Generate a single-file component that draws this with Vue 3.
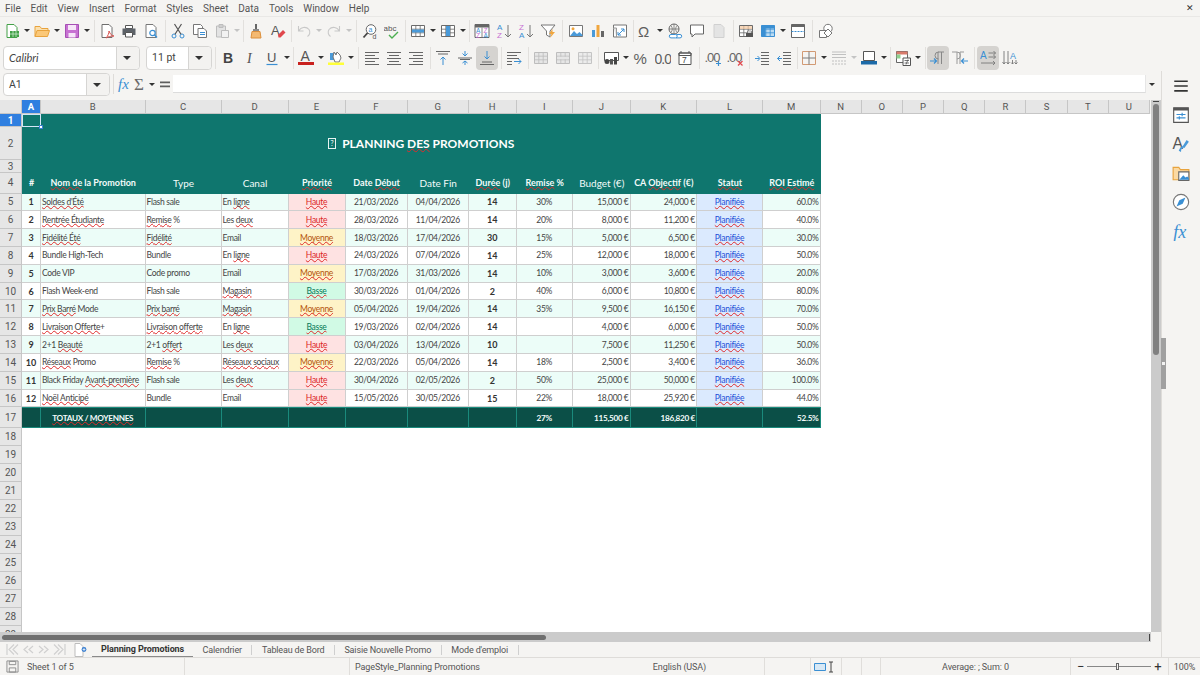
<template>
  <div class="app">
    <div class="menubar">
      <span v-for="m in menus" :key="m" class="menu-item">{{ m }}</span>
      <span class="close-x">✕</span>
    </div>

    <div class="toolbar">
      <template v-for="(item, i) in toolbar1" :key="i">
        <span v-if="item.type === 'sep'" class="tb-sep" :style="{ width: item.w + 'px' }"></span>
        <span v-else-if="item.type === 'drop'" class="tb-drop" :class="{ off: item.off }"></span>
        <span v-else class="tb-btn" :class="{ active: item.active }"><svg viewBox="0 0 16 16" width="16" height="16" v-html="icons[item.name]"></svg></span>
      </template>
    </div>

    <div class="toolbar toolbar-two">
      <div class="combo font-combo">
        <span class="combo-text font-name">Calibri</span>
        <span class="combo-arrow"></span>
      </div>
      <div class="combo size-combo">
        <span class="combo-text">11 pt</span>
        <span class="combo-arrow"></span>
      </div>
      <template v-for="(item, i) in toolbar2" :key="i">
        <span v-if="item.type === 'sep'" class="tb-sep" :style="{ width: item.w + 'px' }"></span>
        <span v-else-if="item.type === 'drop'" class="tb-drop" :class="{ off: item.off }"></span>
        <span v-else class="tb-btn" :class="{ active: item.active }"><svg viewBox="0 0 16 16" width="16" height="16" v-html="icons[item.name]"></svg></span>
      </template>
    </div>

    <div class="workspace">
      <div class="main">
        <div class="formula-bar">
          <div class="combo name-combo">
            <span class="combo-text">A1</span>
            <span class="combo-arrow"></span>
          </div>
          <span class="formula-sep"></span>
          <span class="formula-icon"><svg viewBox="0 0 16 16" width="16" height="16" v-html="icons.fx"></svg></span>
          <span class="formula-icon"><svg viewBox="0 0 16 16" width="16" height="16" v-html="icons.sum"></svg></span>
          <span class="tb-drop"></span>
          <span class="formula-icon formula-eq"><svg viewBox="0 0 16 16" width="16" height="16" v-html="icons.equal"></svg></span>
          <div class="formula-input"></div>
          <span class="tb-drop formula-more"></span>
        </div>

        <div class="sheet">
          <div class="sheet-left">
            <div class="col-heads">
              <span class="corner"></span>
              <div class="col-row">
                <span
                  v-for="c in colNames"
                  :key="c"
                  class="col-head"
                  :class="{ selected: c === 'A' }"
                >{{ c }}</span>
              </div>
            </div>
            <div class="sheet-body">
              <div class="row-heads">
                <span
                  v-for="n in 29"
                  :key="n"
                  class="row-head"
                  :class="{ selected: n === 1 }"
                >{{ n }}</span>
              </div>
              <div class="cells">
                <div class="table">
                  <div class="band a1">
                    <span class="cursor"><span class="cursor-handle"></span></span>
                  </div>
                  <div class="band full"></div>
                  <div class="band title">
                    <span class="tofu">?</span>
                    <span>PLANNING <span class="sq">DES</span> PROMOTIONS</span>
                  </div>
                  <div class="band title-gap"></div>

                  <div
                    v-for="(h, i) in headers"
                    :key="'h' + i"
                    class="head-cell"
                    :class="{ large: h.large }"
                  >
                    <template v-for="(p, j) in parts(h.text)" :key="j">
                      <span :class="{ sq: p.sq }">{{ p.text }}</span>
                    </template>
                  </div>

                  <template v-for="(r, ri) in rows" :key="ri">
                    <div
                      v-for="(val, ci) in r"
                      :key="ci"
                      class="cell"
                      :class="cellClass(ci, val, ri)"
                    >
                      <template v-for="(p, j) in parts(val)" :key="j">
                        <span :class="{ sq: p.sq }">{{ p.text }}</span>
                      </template>
                    </div>
                  </template>

                  <div
                    v-for="(val, i) in totals"
                    :key="'t' + i"
                    class="total-cell"
                    :class="totalAlign[i]"
                  >
                    <template v-for="(p, j) in parts(val)" :key="j">
                      <span :class="{ sq: p.sq }">{{ p.text }}</span>
                    </template>
                  </div>
                </div>
              </div>
            </div>
          </div>
          <div class="vscroll">
            <span class="vscroll-mark"></span>
            <span class="vscroll-thumb"></span>
          </div>
        </div>

        <div class="hscroll">
          <div class="hscroll-track">
            <span class="hscroll-thumb"></span>
            <span class="hscroll-mark"></span>
          </div>
        </div>

        <div class="tabbar">
          <svg class="tab-nav" viewBox="0 0 60 13" width="60" height="13">
            <g fill="none" stroke="#d0d0d0" stroke-width="1.2">
              <path d="M1 1v11M8 1.5 3 6.5l5 5M12 1.5 7 6.5l5 5" />
              <path d="M22 3 18 6.5l4 3.5M27 3l-4 3.5 4 3.5M33 3l4 3.5-4 3.5M38 3l4 3.5-4 3.5" />
              <path d="M59 1v11M52 1.5l5 5-5 5M48 1.5l5 5-5 5" />
            </g>
          </svg>
          <span class="tab-new">
            <svg viewBox="0 0 14 14" width="14" height="14">
              <path d="M1 .5h5l3 3v10H1z" fill="#fff" stroke="#bdbdbd" />
              <circle cx="10" cy="6.5" r="2.4" fill="#3a7fd0" />
              <path d="M8.6 6.5h2.8M10 5.1v2.800" stroke="#fff" stroke-width=".7" />
            </svg>
          </span>
          <span class="tab active">Planning Promotions</span>
          <span class="tab">Calendrier</span>
          <span class="tab-sep"></span>
          <span class="tab">Tableau de Bord</span>
          <span class="tab-sep"></span>
          <span class="tab">Saisie Nouvelle Promo</span>
          <span class="tab-sep"></span>
          <span class="tab">Mode d'emploi</span>
          <span class="tab-sep"></span>
        </div>
      </div>

      <div class="sidebar">
        <span class="side-splitter"><span class="side-dot"></span></span>
        <span v-for="s in sideIcons" :key="s" class="side-btn"><svg viewBox="0 0 16 16" width="18" height="18" v-html="icons[s]"></svg></span>
      </div>
    </div>

    <div class="statusbar">
      <div class="st st-a">
        <svg viewBox="0 0 14 14" width="13" height="13">
          <path d="M1 1h12v12H1z" fill="none" stroke="#8a8a8a" />
          <path d="M3.5 1.5h7v3.5h-7zM3.5 8.5h7V13h-7z" fill="none" stroke="#8a8a8a" />
        </svg>
        <span>Sheet 1 of 5</span>
      </div>
      <div class="st st-b"></div>
      <div class="st st-c">PageStyle_Planning Promotions</div>
      <div class="st st-d">English (USA)</div>
      <div class="st st-e"></div>
      <div class="st st-f">
        <svg viewBox="0 0 24 12" width="24" height="12">
          <path d="M.5 2.5h11v7H.5z" fill="#d7e8f5" stroke="#3a8fd3" />
          <path d="M15 1h4M15 11h4M17 1v10" fill="none" stroke="#444" />
        </svg>
      </div>
      <div class="st st-g"></div>
      <div class="st st-h"></div>
      <div class="st st-i">Average: ; Sum: 0</div>
      <div class="st st-j">
        <span class="zoom-sign">−</span>
        <span class="zoom-track"><span class="zoom-handle"></span></span>
        <span class="zoom-sign">+</span>
      </div>
      <div class="st st-k">100%</div>
    </div>
  </div>
</template>

<script setup>
const menus = ['File', 'Edit', 'View', 'Insert', 'Format', 'Styles', 'Sheet', 'Data', 'Tools', 'Window', 'Help']

// tiny notation for the toolbars: "v" dropdown, "v-" greyed dropdown, "|4" separator, "name!" pressed
const parseBar = (s) => s.split(' ').map((t) => {
  if (t === 'v') return { type: 'drop' }
  if (t === 'v-') return { type: 'drop', off: true }
  if (t[0] === '|') return { type: 'sep', w: Number(t.slice(1)) }
  if (t.endsWith('!')) return { type: 'btn', name: t.slice(0, -1), active: true }
  return { type: 'btn', name: t }
})

const toolbar1 = parseBar('new v open v save v |5 pdf print preview |5 cut copy paste v- |4 clone clear |4 undo v- redo v- |6 find spell |4 rows v cols v |4 sort az za filter |6 image chart pivot |3 omega v link comment hf |5 printarea freeze v split |6 shapes')
const toolbar2 = parseBar('|5 bold italic under v |4 fcolor v hilite v |6 left center right |5 vtop vmid vbot! |5 wrap |5 merge1 merge2 merge3 |4 money v percent number date |6 adddec deldec |5 indent outdent |3 border v lines v- bcolor v |4 cond v |5 ltr! rtl |6 tltr! tvert')

const sideIcons = ['menu', 'props', 'styles', 'gallery', 'nav', 'fxside']

const SERIF = 'font-family="Liberation Serif, serif"'
const SANS = 'font-family="Liberation Sans, sans-serif"'

const T = (x, y, size, fill, text, extra = SANS) =>
  `<text x="${x}" y="${y}" font-size="${size}" fill="${fill}" ${extra}>${text}</text>`

const hlines = (list, color = '#666') =>
  `<path d="${list.map(([a, b, y]) => `M${a} ${y}H${b}`).join('')}" stroke="${color}" fill="none"/>`

const grid = (stroke, fill = '#fff') =>
  `<path d="M1.5 2.5h13v11h-13z" fill="${fill}" stroke="${stroke}"/><path d="M1.5 6.2h13M1.5 9.8h13M5.8 2.5v11M10.2 2.5v11" stroke="${stroke}" fill="none" stroke-width=".8"/>`

const doc = (stroke, fill = '#fff') =>
  `<path d="M3 1.5h7l3 3v10H3z" fill="${fill}" stroke="${stroke}"/>`

const icons = {
  new: `${doc('#43a047')}<path d="M6 8h9v6H6z" fill="#43a047"/><path d="M6 11h9M9 8v6M12 8v6" stroke="#d9f0da" stroke-width=".7"/>`,
  open: `<path d="M1 13.5v-10h5l1.5 2H14V8" fill="#fbe0ae" stroke="#e8a33d"/><path d="M1 13.5 3 7.5h12.5l-2 6z" fill="#fbc878" stroke="#e8a33d"/>`,
  save: `<path d="M1.5 1.5h13v13h-13z" fill="#c771d2" stroke="#a64fb4"/><path d="M4 2h8v5H4zM4.5 10h7v4.5h-7z" fill="#f6e6f8"/>`,
  pdf: `${doc('#6e6e6e')}<path d="M7 15c2-2 3-5 3-7 1 3 3 5 5 5-3 0-6 .6-8 2z" fill="none" stroke="#d9534f"/>`,
  print: `<path d="M4.5 2.5h7v3h-7z" fill="#fff" stroke="#555"/><path d="M1.5 5.5h13v6.5h-13z" fill="#5d6268"/><path d="M4.5 9.5h7v4.5h-7z" fill="#fff" stroke="#555"/>`,
  preview: `${doc('#777')}<circle cx="9.5" cy="10" r="2.7" fill="#fff" stroke="#3a8fd3" stroke-width="1.2"/><path d="m11.5 12 2.5 2.5" stroke="#3a8fd3" stroke-width="1.4"/>`,
  cut: `<circle cx="4" cy="13" r="2" fill="none" stroke="#3a8fd3"/><circle cx="12" cy="13" r="2" fill="none" stroke="#3a8fd3"/><path d="M5 11.3 11.5 1M11 11.3 4.5 1" stroke="#555" stroke-width="1.2"/>`,
  copy: `<path d="M1.5 1.5h7l2 2v8h-9z" fill="#fff" stroke="#777"/><path d="M6 5.5h6l2.5 2.5v6.5H6z" fill="#fff" stroke="#777"/>${hlines([[8, 13, 9.5], [8, 13, 11.5]], '#3a8fd3')}`,
  paste: `<path d="M2.5 3h9v11h-9z" fill="#e3e3e3" stroke="#bdbdbd"/><path d="M5 1.5h4v3H5z" fill="#cfcfcf" stroke="#bdbdbd"/><path d="M7.5 7.5h7v7h-7z" fill="#f2f2f2" stroke="#bdbdbd"/>`,
  clone: `<path d="M7 1h2v5H7z" fill="#666"/><path d="M5 6h6v2.5H5z" fill="#8a8a8a"/><path d="M4 8.5h8l1 6.5H3z" fill="#f4b971" stroke="#dc8f3c"/>`,
  clear: `${T(1, 12, 13, '#555', 'A')}<path d="m8 12 5-5 2.5 2.5-5 5H8.5z" fill="#e0474c"/>`,
  undo: `<path d="M2.5 3v5h5M2.8 8C4.5 4 10 3 13 6.5c1.7 2.5.7 5.5-1.5 7" fill="none" stroke="#c8c8c8" stroke-width="1.1"/>`,
  redo: `<path d="M13.5 3v5h-5M13.2 8C11.5 4 6 3 3 6.5c-1.7 2.5-.7 5.5 1.5 7" fill="none" stroke="#c8c8c8" stroke-width="1.1"/>`,
  find: `<circle cx="9" cy="6.5" r="4.8" fill="#fff" stroke="#666"/><path d="M5.5 10 1.5 14.5" stroke="#444" stroke-width="1.8"/>${T(6.6, 8.8, 7, '#3a8fd3', 'a')}${T(10.5, 15.5, 7, '#555', 'd')}`,
  spell: `${T(-.5, 8, 8, '#555', 'abc')}<path d="m5 12 3 3 6-6" fill="none" stroke="#4caf50" stroke-width="1.4"/>`,
  rows: `${grid('#6b6b6b')}<path d="M2 6.5h12v3H2z" fill="#4a9ad9"/>`,
  cols: `${grid('#6b6b6b')}<path d="M6 3h4v10H6z" fill="#4a9ad9"/>`,
  sort: `<path d="M1 1.5h14v13H1z" fill="#fff" stroke="#666"/><path d="M1 1.5h14v3H1z" fill="#666"/><path d="M8 4.5v10" stroke="#888"/>${T(2, 10, 6.5, '#3a8fd3', 'A')}${T(2, 15, 6.5, '#c771d2', 'Z')}${T(9.5, 10, 6.5, '#c771d2', 'Z')}${T(9.5, 15, 6.5, '#3a8fd3', 'A')}`,
  az: `${T(1, 7, 8, '#3a8fd3', 'A')}${T(1, 15, 8, '#c771d2', 'Z')}<path d="M12 2v12M9 11l3 3 3-3" fill="none" stroke="#777"/>`,
  za: `${T(1, 7, 8, '#c771d2', 'Z')}${T(1, 15, 8, '#3a8fd3', 'A')}<path d="M12 2v12M9 11l3 3 3-3" fill="none" stroke="#777"/>`,
  filter: `<path d="M1 2h14L10 8v6L6.5 12V8z" fill="#fff" stroke="#777"/><path d="M12.5 6 9 11h2.5L10 15l5-6h-2.5z" fill="#f0a63e"/>`,
  image: `<path d="M1.5 2.5h13v11h-13z" fill="#fff" stroke="#777"/><circle cx="5" cy="5.8" r="1.5" fill="#f0a63e"/><path d="M2 13l4-5 3 3 2.5-2 3 3v1z" fill="#4a9ad9"/>`,
  chart: `<path d="M2 7h3v7H2z" fill="#4a9ad9"/><path d="M6.5 2h3v12h-3z" fill="#f0a63e"/><path d="M11 8h3v6h-3z" fill="#666"/>`,
  pivot: `<path d="M1.5 2h13v12h-13z" fill="#fff" stroke="#777"/><path d="M1.5 5h3v9" fill="#e6e6e6" stroke="#999"/><path d="M6 12 12 6M9 6h3v3M6 9v3h3" fill="none" stroke="#3a8fd3"/>`,
  omega: T(1, 14, 15, '#5e5e5e', 'Ω'),
  link: `<circle cx="7" cy="6" r="5" fill="none" stroke="#666"/><path d="M2 6h10M7 1v10M3.8 2.5c2 2 2 5 0 7M10.2 2.5c-2 2-2 5 0 7" fill="none" stroke="#666" stroke-width=".7"/><path d="M4 11.5h4.5a1.7 1.7 0 0 1 0 3.4H4a1.7 1.7 0 0 1 0-3.4zM9.5 11.5H13a1.7 1.7 0 0 1 0 3.4H9" fill="#fff" stroke="#3a8fd3"/>`,
  comment: `<path d="M1.5 2h13v9H6l-3 3v-3H1.5z" fill="#fff" stroke="#666"/>`,
  hf: `<path d="M3 1.5h7l3 3v10H3z" fill="#e4e4e4" stroke="#d0d0d0"/>`,
  printarea: `${grid('#6b6b6b')}<path d="M2 3h12v3H2z" fill="#f4c7a0" opacity=".7"/><path d="M8 10h7v4H8z" fill="#555"/><path d="M9.5 8h4v2h-4z" fill="#fff" stroke="#555" stroke-width=".6"/>`,
  freeze: `${grid('#3a8fd3', '#bcdcf3')}<path d="M1.5 2.5h13v3h-13zM1.5 2.5h4v11h-4z" fill="#3a8fd3"/>`,
  split: `<path d="M1.5 1.5h13v13h-13z" fill="#fff" stroke="#666"/><path d="M1.5 1.5h13V4h-13z" fill="#666"/><path d="M1.5 8.5h13" stroke="#3a8fd3" stroke-dasharray="2 1"/>`,
  shapes: `<circle cx="10" cy="5.5" r="4.2" fill="#fff" stroke="#777"/><path d="M1.5 7.5h7v7h-7z" fill="#fff" stroke="#777"/><path d="m10 6 4 4-4 4-4-4z" fill="#fff" stroke="#777"/>`,

  bold: T(3, 13, 14, '#444', 'B', `${SANS} font-weight="bold"`),
  italic: T(5, 13, 14, '#555', 'I', `${SERIF} font-style="italic"`),
  under: `${T(3, 12, 13, '#555', 'U')}<path d="M2.5 14.5h11" stroke="#3a8fd3" stroke-width="1.2"/>`,
  fcolor: `${T(2.5, 11, 14, '#555', 'A')}<path d="M0 12h16v3H0z" fill="#c9211e"/>`,
  hilite: `<path d="M2 3h6v7H2z" fill="#4a9ad9"/><path d="M6 2l2 3 1-3 3 3 1 3-2 4H7L5 7z" fill="#fff" stroke="#777"/><path d="M0 12.5h16V15H0z" fill="#ffff38"/>`,
  left: hlines([[1, 15, 2.5], [1, 11, 5.5], [1, 15, 8.5], [1, 11, 11.5], [1, 15, 14.5]]),
  center: hlines([[1, 15, 2.5], [3, 13, 5.5], [1, 15, 8.5], [3, 13, 11.5], [1, 15, 14.5]]),
  right: hlines([[1, 15, 2.5], [5, 15, 5.5], [1, 15, 8.5], [5, 15, 11.5], [1, 15, 14.5]]),
  vtop: `${hlines([[1, 15, 1.5], [3, 13, 4]])}<path d="M8 7v8M5.5 9.5 8 7l2.5 2.5" fill="none" stroke="#3a8fd3"/>`,
  vmid: `${hlines([[1, 15, 8], [3, 13, 9.5]])}<path d="M8 1v5M5.5 3.5 8 6l2.5-2.5M8 15v-4M5.5 13 8 11l2.5 2" fill="none" stroke="#3a8fd3"/>`,
  vbot: `${hlines([[1, 15, 14.5], [3, 13, 12]])}<path d="M8 1v8M5.5 6.5 8 9l2.5-2.5" fill="none" stroke="#3a8fd3"/>`,
  wrap: `${hlines([[1, 15, 2.5], [1, 11, 5.5], [1, 13, 8.5], [1, 6, 11.5], [1, 6, 14.5]])}<path d="M8 11.5h7M12.5 9l2.5 2.5-2.5 2.5" fill="none" stroke="#3a8fd3"/>`,
  merge1: grid('#bdbdbd', '#e6e6e6'),
  merge2: `${grid('#bdbdbd', '#e6e6e6')}<path d="M3 6.8h10v2.4H3z" fill="#e6e6e6"/>`,
  merge3: grid('#c4c4c4', '#ececec'),
  money: `<path d="M1.5 2.5h14v8h-14z" fill="#fff" stroke="#555"/><circle cx="4" cy="11.5" r="2.5" fill="#444"/><path d="M7 9h3v5.5H7z" fill="#555"/><path d="M11 7h3v7.5h-3z" fill="#444"/>`,
  percent: T(.5, 14, 15, '#5e5e5e', '%'),
  number: T(-.5, 13.5, 14, '#5e5e5e', '0.0', `${SANS} letter-spacing="-1"`),
  date: `<path d="M2 3h12v11.5H2z" fill="#fff" stroke="#555"/><path d="M2 3h12v2.5H2zM4 1v2M12 1v2" fill="none" stroke="#555"/>${T(5, 13, 8.5, '#444', '7')}`,
  adddec: `${T(-.5, 12, 13, '#666', '.00', `${SANS} letter-spacing="-1"`)}<path d="M11 13.5h5M13.5 11v5" stroke="#3a8fd3" stroke-width="1.2"/>`,
  deldec: `${T(-.5, 12, 13, '#666', '.00', `${SANS} letter-spacing="-1"`)}<path d="m11 11 4.5 4.5m0-4.5L11 15.5" stroke="#e0474c" stroke-width="1.2"/>`,
  indent: `${hlines([[7, 15, 2.5], [7, 15, 5.5], [7, 15, 8.5], [7, 15, 11.5], [7, 15, 14.5]])}<path d="M1 8.5h4.5M3.5 6 6 8.5 3.5 11" fill="none" stroke="#3a8fd3"/>`,
  outdent: `${hlines([[7, 15, 2.5], [7, 15, 5.5], [7, 15, 8.5], [7, 15, 11.5], [7, 15, 14.5]])}<path d="M6 8.5H1.5M4 6 1.5 8.5 4 11" fill="none" stroke="#3a8fd3"/>`,
  border: `<path d="M1.5 1.5h13v13h-13z" fill="none" stroke="#d29a74"/><path d="M8 1.5v13M1.5 8h13" stroke="#7a7a7a"/>`,
  lines: hlines([[1, 15, 2], [1, 15, 4.5], [1, 15, 7.5]], '#c0c0c0') + `<path d="M1 11h14M1 14h14" stroke="#c0c0c0" stroke-dasharray="2 1"/>`,
  bcolor: `<path d="M2.5 1.5h11v9h-11z" fill="#fff" stroke="#555"/><path d="M0 11h16v3.5H0z" fill="#1c6aa8"/>`,
  cond: `<path d="M1.5 1.5h11v11h-11z" fill="#fff" stroke="#666"/><path d="M1.5 1.5h11v3h-11z" fill="#d97b6c"/><path d="M1.5 4.5h4v4h-4z" fill="#8fd08f"/><path d="M8 8h7.5v7.5H8z" fill="#fff" stroke="#555"/><path d="M9.5 10.5H14M9.5 13H14M13 9.5l-2 5" stroke="#555" stroke-width=".8"/>`,
  ltr: `<path d="M8 14V2h6M11.5 14V2M8.5 2a3.5 3.5 0 0 0 0 7" fill="none" stroke="#888"/><path d="M0 11h6M4 8.5 6.5 11 4 13.5" fill="none" stroke="#3a8fd3" stroke-width="1.2"/>`,
  rtl: `<path d="M5 14V2H0M8 14V2h4M5 2a3.5 3.5 0 0 1 0 7" fill="none" stroke="#999"/><path d="M16 11h-6M12 8.5 9.5 11l2.5 2.5" fill="none" stroke="#3a8fd3" stroke-width="1.2"/>`,
  tltr: `${T(0, 9, 10, '#3a8fd3', 'A')}<path d="M8.5 3h7M13.5 1l2 2-2 2M8.5 7h7M13.5 5l2 2-2 2M1 13h14M13 11l2 2-2 2" fill="none" stroke="#777" stroke-width=".9"/>`,
  tvert: `${T(8, 9, 9, '#3a8fd3', 'A')}<path d="M2 1v13M.5 12 2 14l1.5-2M6 1v13M4.5 12 6 14l1.5-2M10.5 10v4M9 12.5l1.5 1.5 1.500-1.500M14 10v4M12.5 12.500 14 14l1.500-1.500" fill="none" stroke="#777" stroke-width=".9"/>`,

  fx: T(2, 13, 15, '#3a8fd3', 'fx', `${SERIF} font-style="italic"`),
  sum: T(2, 14, 17, '#6a6a6a', 'Σ', SERIF),
  equal: `<path d="M3 5.5h10v1.8H3zM3 9.5h10v1.8H3z" fill="#5e5e5e"/>`,
  menu: `<path d="M2 3h12v1.4H2zM2 7.3h12v1.4H2zM2 11.6h12V13H2z" fill="#333"/>`,
  props: `<path d="M1.5 1.5h13v13h-13z" fill="#fff" stroke="#555"/><path d="M1.5 1.5h13V4h-13z" fill="#555"/><path d="M4 7.5h8M4 10.5h8" stroke="#3a8fd3"/><path d="M9 6v3M6.5 9v3" stroke="#3a8fd3"/>`,
  styles: `${T(.5, 12, 14, '#555', 'A')}<path d="M8 15c0-3 1.5-4 3-3.5L15 6l-2-1.5-3.5 5.500C8.500 9.500 7 11.500 6 14z" fill="#4a9ad9"/>`,
  gallery: `<path d="M1 14V3h5l1.5 2H15v9z" fill="#fbd9a2" stroke="#e8a33d"/><path d="M6 7h9v7.5H6z" fill="#fff" stroke="#666"/><path d="M6.5 14 10 10l2 2 1.5-1 1.5 1.5V14z" fill="#3a8fd3"/>`,
  nav: `<circle cx="8" cy="8" r="6.8" fill="#fff" stroke="#777"/><path d="M12 4 9.5 9.5 4 12l2.5-5.5z" fill="#3a8fd3"/>`,
  fxside: T(1, 13.5, 16, '#3a8fd3', 'fx', `${SERIF} font-style="italic"`)
}

const colNames = 'ABCDEFGHIJKLMNOPQRSTU'.split('')

// ~word~ marks what the spell checker has flagged
const parts = (text) => String(text).split('~').map((t, i) => ({ text: t, sq: i % 2 === 1 })).filter((p) => p.text)

const headers = [
  { text: '#' },
  { text: '~Nom de~ la Promotion' },
  { text: 'Type', large: true },
  { text: 'Canal', large: true },
  { text: '~Priorité~' },
  { text: 'Date ~Début~' },
  { text: 'Date Fin', large: true },
  { text: '~Durée~ (j)' },
  { text: '~Remise~ %' },
  { text: 'Budget (€)', large: true },
  { text: 'CA ~Objectif~ (€)' },
  { text: '~Statut~' },
  { text: '~ROI Estimé~' }
]

const S = '~Planifiée~'
const rows = [
  [1, "~Soldes d'Été~", 'Flash sale', 'En ~ligne~', '~Haute~', '21/03/2026', '04/04/2026', 14, '30%', '15,000 €', '24,000 €', S, '60.0%'],
  [2, '~Rentrée Étudiante~', '~Remise~ %', 'Les ~deux~', '~Haute~', '28/03/2026', '11/04/2026', 14, '20%', '8,000 €', '11,200 €', S, '40.0%'],
  [3, '~Fidélité Été~', '~Fidélité~', 'Email', '~Moyenne~', '18/03/2026', '17/04/2026', 30, '15%', '5,000 €', '6,500 €', S, '30.0%'],
  [4, 'Bundle High-Tech', 'Bundle', 'En ~ligne~', '~Haute~', '24/03/2026', '07/04/2026', 14, '25%', '12,000 €', '18,000 €', S, '50.0%'],
  [5, 'Code VIP', 'Code promo', 'Email', '~Moyenne~', '17/03/2026', '31/03/2026', 14, '10%', '3,000 €', '3,600 €', S, '20.0%'],
  [6, 'Flash Week-end', 'Flash sale', '~Magasin~', '~Basse~', '30/03/2026', '01/04/2026', 2, '40%', '6,000 €', '10,800 €', S, '80.0%'],
  [7, '~Prix Barré~ Mode', '~Prix barré~', '~Magasin~', '~Moyenne~', '05/04/2026', '19/04/2026', 14, '35%', '9,500 €', '16,150 €', S, '70.0%'],
  [8, '~Livraison Offerte~+', '~Livraison offerte~', 'En ~ligne~', '~Basse~', '19/03/2026', '02/04/2026', 14, '', '4,000 €', '6,000 €', S, '50.0%'],
  [9, '2+1 ~Beauté~', '2+1 ~offert~', 'Les ~deux~', '~Haute~', '03/04/2026', '13/04/2026', 10, '', '7,500 €', '11,250 €', S, '50.0%'],
  [10, '~Réseaux~ Promo', '~Remise~ %', '~Réseaux sociaux~', '~Moyenne~', '22/03/2026', '05/04/2026', 14, '18%', '2,500 €', '3,400 €', S, '36.0%'],
  [11, 'Black Friday ~Avant-première~', 'Flash sale', 'Les ~deux~', '~Haute~', '30/04/2026', '02/05/2026', 2, '50%', '25,000 €', '50,000 €', S, '100.0%'],
  [12, '~Noël Anticipé~', 'Bundle', 'Email', '~Haute~', '15/05/2026', '30/05/2026', 15, '22%', '18,000 €', '25,920 €', S, '44.0%']
]

const totals = ['', '~TOTAUX / MOYENNES~', '', '', '', '', '', '', '27%', '115,500 €', '186,820 €', '', '52.5%']
const totalAlign = totals.map((_, i) => (i === 1 || i === 8 ? 'center' : i > 8 ? 'end' : ''))

const cellClass = (ci, val, ri) => {
  const list = [ri % 2 === 0 ? 'stripe' : 'plain']
  if (ci === 0 || ci === 7) list.push('center', 'strong')
  else if ([5, 6, 8].includes(ci)) list.push('center')
  else if ([9, 10, 12].includes(ci)) list.push('end')
  if (ci === 4) {
    list.push('center')
    list.push(String(val).includes('Haute') ? 'high' : String(val).includes('Moyenne') ? 'mid' : 'low')
  }
  if (ci === 11) list.push('center', 'status')
  return list
}
</script>

<style>
html,
body {
  margin: 0;
  background: #f5f4f2;
}
</style>

<style scoped>
.app {
  width: 1200px;
  height: 675px;
  overflow: hidden;
  display: flex;
  flex-direction: column;
  background: #f5f4f2;
  font-family: Roboto, "Noto Sans", sans-serif;
  color: #444;
}

/* menu + toolbars */
.menubar {
  height: 16px;
  border-bottom: 1px solid #e9e8e6;
  display: flex;
  align-items: center;
  font-size: 10px;
  color: #555;
  padding-left: 5px;
  flex-shrink: 0;
}

.menu-item {
  margin-right: 9.9px;
}

.close-x {
  margin-left: auto;
  margin-right: 6px;
  font-size: 9px;
  color: #333;
}

.toolbar {
  height: 27px;
  display: flex;
  align-items: center;
  padding-left: 1px;
  flex-shrink: 0;
}

.toolbar-two {
  padding-left: 3px;
}

.tb-btn {
  width: 22px;
  height: 24px;
  display: flex;
  align-items: center;
  justify-content: center;
  flex-shrink: 0;
  border-radius: 4px;
}

.tb-btn.active {
  background: #d5d3d0;
}

.tb-btn svg {
  display: block;
}

.tb-drop {
  width: 8px;
  height: 24px;
  position: relative;
  flex-shrink: 0;
}

.tb-drop::after {
  content: "";
  position: absolute;
  left: 1px;
  top: 10.5px;
  border-left: 3px solid transparent;
  border-right: 3px solid transparent;
  border-top: 3px solid #333;
}

.tb-drop.off::after {
  border-top-color: #c4c4c4;
}

.tb-sep {
  height: 22px;
  flex-shrink: 0;
  position: relative;
}

.tb-sep::after {
  content: "";
  position: absolute;
  left: 50%;
  top: 0;
  bottom: 0;
  width: 1px;
  background: #e2e0dd;
}

.combo {
  height: 22px;
  display: flex;
  align-items: center;
  background: #fff;
  border: 1px solid #d6d5d3;
  border-radius: 4px;
  flex-shrink: 0;
  box-sizing: border-box;
}

.font-combo {
  width: 137px;
  height: 24px;
  margin-right: 6px;
}

.size-combo {
  width: 66px;
  height: 24px;
}

.name-combo {
  width: 107px;
  height: 23px;
  margin-left: 3px;
}

.combo-text {
  flex: 1;
  padding-left: 5px;
  font-size: 10.5px;
  color: #444;
}

.font-name {
  font-family: Lato, sans-serif;
  font-style: italic;
  font-size: 11px;
}

.combo-arrow {
  width: 23px;
  height: 100%;
  position: relative;
  background: #f3f2f0;
  border-left: 1px solid #d6d5d3;
  border-radius: 0 4px 4px 0;
  box-sizing: border-box;
}

.combo-arrow::after {
  content: "";
  position: absolute;
  left: 6px;
  top: 9px;
  border-left: 4px solid transparent;
  border-right: 4px solid transparent;
  border-top: 4px solid #333;
}

/* workspace */
.workspace {
  flex: 1;
  display: flex;
  min-height: 0;
}

.main {
  width: 1161px;
  display: flex;
  flex-direction: column;
  flex-shrink: 0;
}

.formula-bar {
  height: 29px;
  display: flex;
  align-items: center;
  flex-shrink: 0;
  box-sizing: border-box;
  padding-bottom: 3px;
}

.formula-sep {
  width: 1px;
  height: 20px;
  background: #dedcd9;
  margin: 0 2px 0 3px;
}

.formula-icon {
  display: flex;
  width: 16px;
  height: 16px;
  flex-shrink: 0;
}

.formula-icon svg {
  display: block;
}

.formula-eq {
  margin-left: 1px;
}

.formula-input {
  width: 973px;
  height: 18px;
  background: #fff;
  border-bottom: 1px solid #dcdcdc;
  border-right: 1px solid #e6e6e6;
  box-sizing: border-box;
  flex-shrink: 0;
}

.formula-more {
  margin-left: 2px;
}

.sheet {
  flex: 1;
  min-height: 0;
  display: flex;
}

.sheet-left {
  width: 1151px;
  display: flex;
  flex-direction: column;
}

.col-heads {
  height: 14px;
  display: flex;
  flex-shrink: 0;
}

.corner {
  width: 22px;
  flex-shrink: 0;
  background: #e6e6e6;
  border-right: 1px solid #c6c6c6;
  border-bottom: 1px solid #c6c6c6;
  box-sizing: border-box;
}

.col-row {
  flex: 1;
  display: grid;
  grid-template-columns: 19px 104.5px 76px 67px 57px 62px 61.5px 47.5px 56.5px 57.5px 66.5px 66px 57.5px repeat(8, 41.2px);
}

.col-head {
  background: #e6e6e6;
  border-right: 1px solid #c6c6c6;
  border-bottom: 1px solid #c6c6c6;
  box-sizing: border-box;
  font-size: 9.5px;
  line-height: 13px;
  text-align: center;
  color: #555;
}

.col-head.selected {
  background: #2f7fe0;
  color: #fff;
  font-weight: 700;
}

.sheet-body {
  flex: 1;
  min-height: 0;
  display: flex;
  overflow: hidden;
}

.row-heads {
  width: 22px;
  flex-shrink: 0;
  display: grid;
  grid-template-rows: 13px 33px 13px 20.5px repeat(12, 17.833px) 21px repeat(12, 18px);
  background: #e6e6e6;
}

.row-head {
  border-right: 1px solid #c6c6c6;
  border-bottom: 1px solid #c6c6c6;
  box-sizing: border-box;
  font-size: 10px;
  color: #555;
  display: flex;
  align-items: center;
  justify-content: center;
  overflow: hidden;
}

.row-head.selected {
  background: #2f7fe0;
  color: #fff;
  font-weight: 700;
}

.cells {
  flex: 1;
  background: #fff;
  overflow: hidden;
}

.table {
  width: 798.5px;
  display: grid;
  grid-template-columns: 19px 104.5px 76px 67px 57px 62px 61.5px 47.5px 56.5px 57.5px 66.5px 66px 57.5px;
  grid-template-rows: 13px 33px 13px 20.5px repeat(12, 17.833px) 21px;
  font-family: Lato, "Liberation Sans", sans-serif;
  font-size: 8.5px;
  letter-spacing: -0.3px;
  color: #444;
}

.band {
  background: #0f766e;
}

.a1 {
  grid-column: 1 / 2;
  position: relative;
}

.full {
  grid-column: 2 / -1;
}

.title {
  grid-column: 1 / -1;
  display: flex;
  align-items: center;
  justify-content: center;
  gap: 6px;
  color: #fff;
  font-size: 12px;
  font-weight: 700;
  letter-spacing: 0;
  padding-bottom: 1px;
  box-sizing: border-box;
}

.title-gap {
  grid-column: 1 / -1;
}

.tofu {
  width: 6px;
  height: 9px;
  border: 1px solid #e6f3f1;
  font-size: 7px;
  line-height: 9px;
  text-align: center;
  font-weight: 400;
}

.cursor {
  position: absolute;
  left: 0;
  top: 0;
  width: 19px;
  height: 13px;
  border: 1px solid #d5e6f7;
  box-sizing: border-box;
  z-index: 2;
}

.cursor-handle {
  position: absolute;
  right: -3px;
  bottom: -3px;
  width: 4px;
  height: 4px;
  background: #fff;
  border: 1px solid #3a7fd0;
  box-sizing: border-box;
}

.head-cell {
  background: #0f766e;
  color: #f3fbfa;
  font-weight: 700;
  font-size: 9px;
  letter-spacing: 0;
  display: flex;
  align-items: center;
  justify-content: center;
  white-space: pre;
  padding-bottom: 1px;
  box-sizing: border-box;
}

.head-cell.large {
  font-size: 10px;
  font-weight: 400;
}

.cell {
  display: flex;
  align-items: center;
  padding: 0 1px;
  white-space: pre;
  border-right: 1px solid #cfcfcf;
  border-bottom: 1px solid #cfcfcf;
  box-sizing: border-box;
  overflow: hidden;
}

.cell.stripe {
  background: #ecfdf8;
}

.cell.plain {
  background: #fff;
}

.cell.center {
  justify-content: center;
}

.cell.end {
  justify-content: flex-end;
}

.cell.strong {
  font-weight: 700;
  font-size: 9px;
  letter-spacing: 0;
  color: #333;
}

.cell.high {
  background: #fee2e2;
  color: #dc2626;
}

.cell.mid {
  background: #fef3c7;
  color: #b45309;
}

.cell.low {
  background: #d1fae5;
  color: #047857;
}

.cell.status {
  background: #dbeafe;
  color: #1d4ed8;
}

.total-cell {
  background: #0b4f47;
  color: #f3fbfa;
  font-weight: 700;
  font-size: 8.2px;
  display: flex;
  align-items: center;
  padding: 0 1px;
  border-right: 1px solid #1a8a7c;
  border-top: 1px solid #1a8a7c;
  border-bottom: 1px solid #1a8a7c;
  box-sizing: border-box;
  white-space: pre;
}

.total-cell.center {
  justify-content: center;
}

.total-cell.end {
  justify-content: flex-end;
}

.sq {
  text-decoration: underline wavy #e02b2b 1px;
  text-underline-offset: 0;
  text-decoration-skip-ink: none;
}

/* scrollbars */
.vscroll {
  width: 10px;
  background: #cbcbcb;
  position: relative;
  flex-shrink: 0;
}

.vscroll-mark {
  position: absolute;
  left: 2px;
  top: 1px;
  width: 6px;
  height: 1px;
  background: #444;
}

.vscroll-thumb {
  position: absolute;
  left: 2px;
  top: 4px;
  width: 6px;
  height: 251px;
  border-radius: 3px;
  background: #808080;
}

.hscroll {
  height: 10px;
  flex-shrink: 0;
  display: flex;
}

.hscroll-track {
  width: 1151px;
  height: 10px;
  background: #cbcbcb;
  position: relative;
}

.hscroll-thumb {
  position: absolute;
  left: 2px;
  top: 3px;
  width: 544px;
  height: 5px;
  border-radius: 3px;
  background: #6f6f6f;
}

.hscroll-mark {
  position: absolute;
  right: 1px;
  top: 2px;
  width: 1px;
  height: 7px;
  background: #444;
}

.tabbar {
  height: 15px;
  flex-shrink: 0;
  display: flex;
  align-items: center;
  font-size: 9px;
  letter-spacing: -0.15px;
  color: #555;
}

.tab-nav {
  margin-left: 6px;
  flex-shrink: 0;
}

.tab-new {
  display: flex;
  margin-left: 8px;
  margin-right: 4px;
}

.tab {
  padding: 0 9.5px;
  line-height: 14px;
  white-space: pre;
}

.tab.active {
  font-weight: 700;
  color: #333;
  padding: 0 9px;
  letter-spacing: -0.1px;
  border-bottom: 2px solid #8a8a8a;
  height: 13px;
  line-height: 13px;
  margin-top: 1px;
}

.tab-sep {
  width: 1px;
  height: 10px;
  background: #cfcfcf;
}

/* sidebar */
.sidebar {
  flex: 1;
  position: relative;
  display: flex;
  flex-direction: column;
  align-items: center;
  border-left: 1px solid #dedcd9;
  box-sizing: border-box;
}

.side-btn {
  height: 29.2px;
  display: flex;
  align-items: center;
  justify-content: center;
}

.side-btn svg {
  display: block;
}

.side-splitter {
  position: absolute;
  left: -1px;
  top: 267px;
  width: 5px;
  height: 51px;
  background: #a0a0a0;
}

.side-dot {
  position: absolute;
  left: 1px;
  top: 24px;
  width: 3px;
  height: 3px;
  background: #f2f2f2;
}

/* status bar */
.statusbar {
  height: 18px;
  flex-shrink: 0;
  display: flex;
  font-size: 9px;
  letter-spacing: -0.1px;
  color: #555;
  border-top: 1px solid #dedcd9;
  box-sizing: border-box;
}

.st {
  display: flex;
  align-items: center;
  border-right: 1px solid #e0dedb;
  box-sizing: border-box;
  white-space: pre;
}

.st-a {
  width: 185px;
  padding-left: 6px;
  gap: 8px;
}

.st-b {
  width: 165px;
}

.st-c {
  width: 245px;
  padding-left: 5px;
  border-right: none;
}

.st-d {
  width: 170px;
  justify-content: center;
}

.st-e {
  width: 46px;
}

.st-f {
  width: 31px;
  justify-content: center;
}

.st-g {
  width: 20px;
}

.st-h {
  width: 19px;
}

.st-i {
  width: 190px;
  justify-content: center;
}

.st-j {
  width: 98px;
  padding-left: 6px;
  gap: 3px;
}

.st-k {
  flex: 1;
  border-right: none;
  justify-content: center;
}

.zoom-sign {
  font-size: 13px;
  line-height: 13px;
  color: #333;
}

.zoom-track {
  width: 64px;
  height: 1px;
  background: #888;
  position: relative;
}

.zoom-handle {
  position: absolute;
  left: 29px;
  top: -3px;
  width: 3px;
  height: 7px;
  background: #f5f4f2;
  border: 1px solid #666;
  box-sizing: border-box;
}
</style>
